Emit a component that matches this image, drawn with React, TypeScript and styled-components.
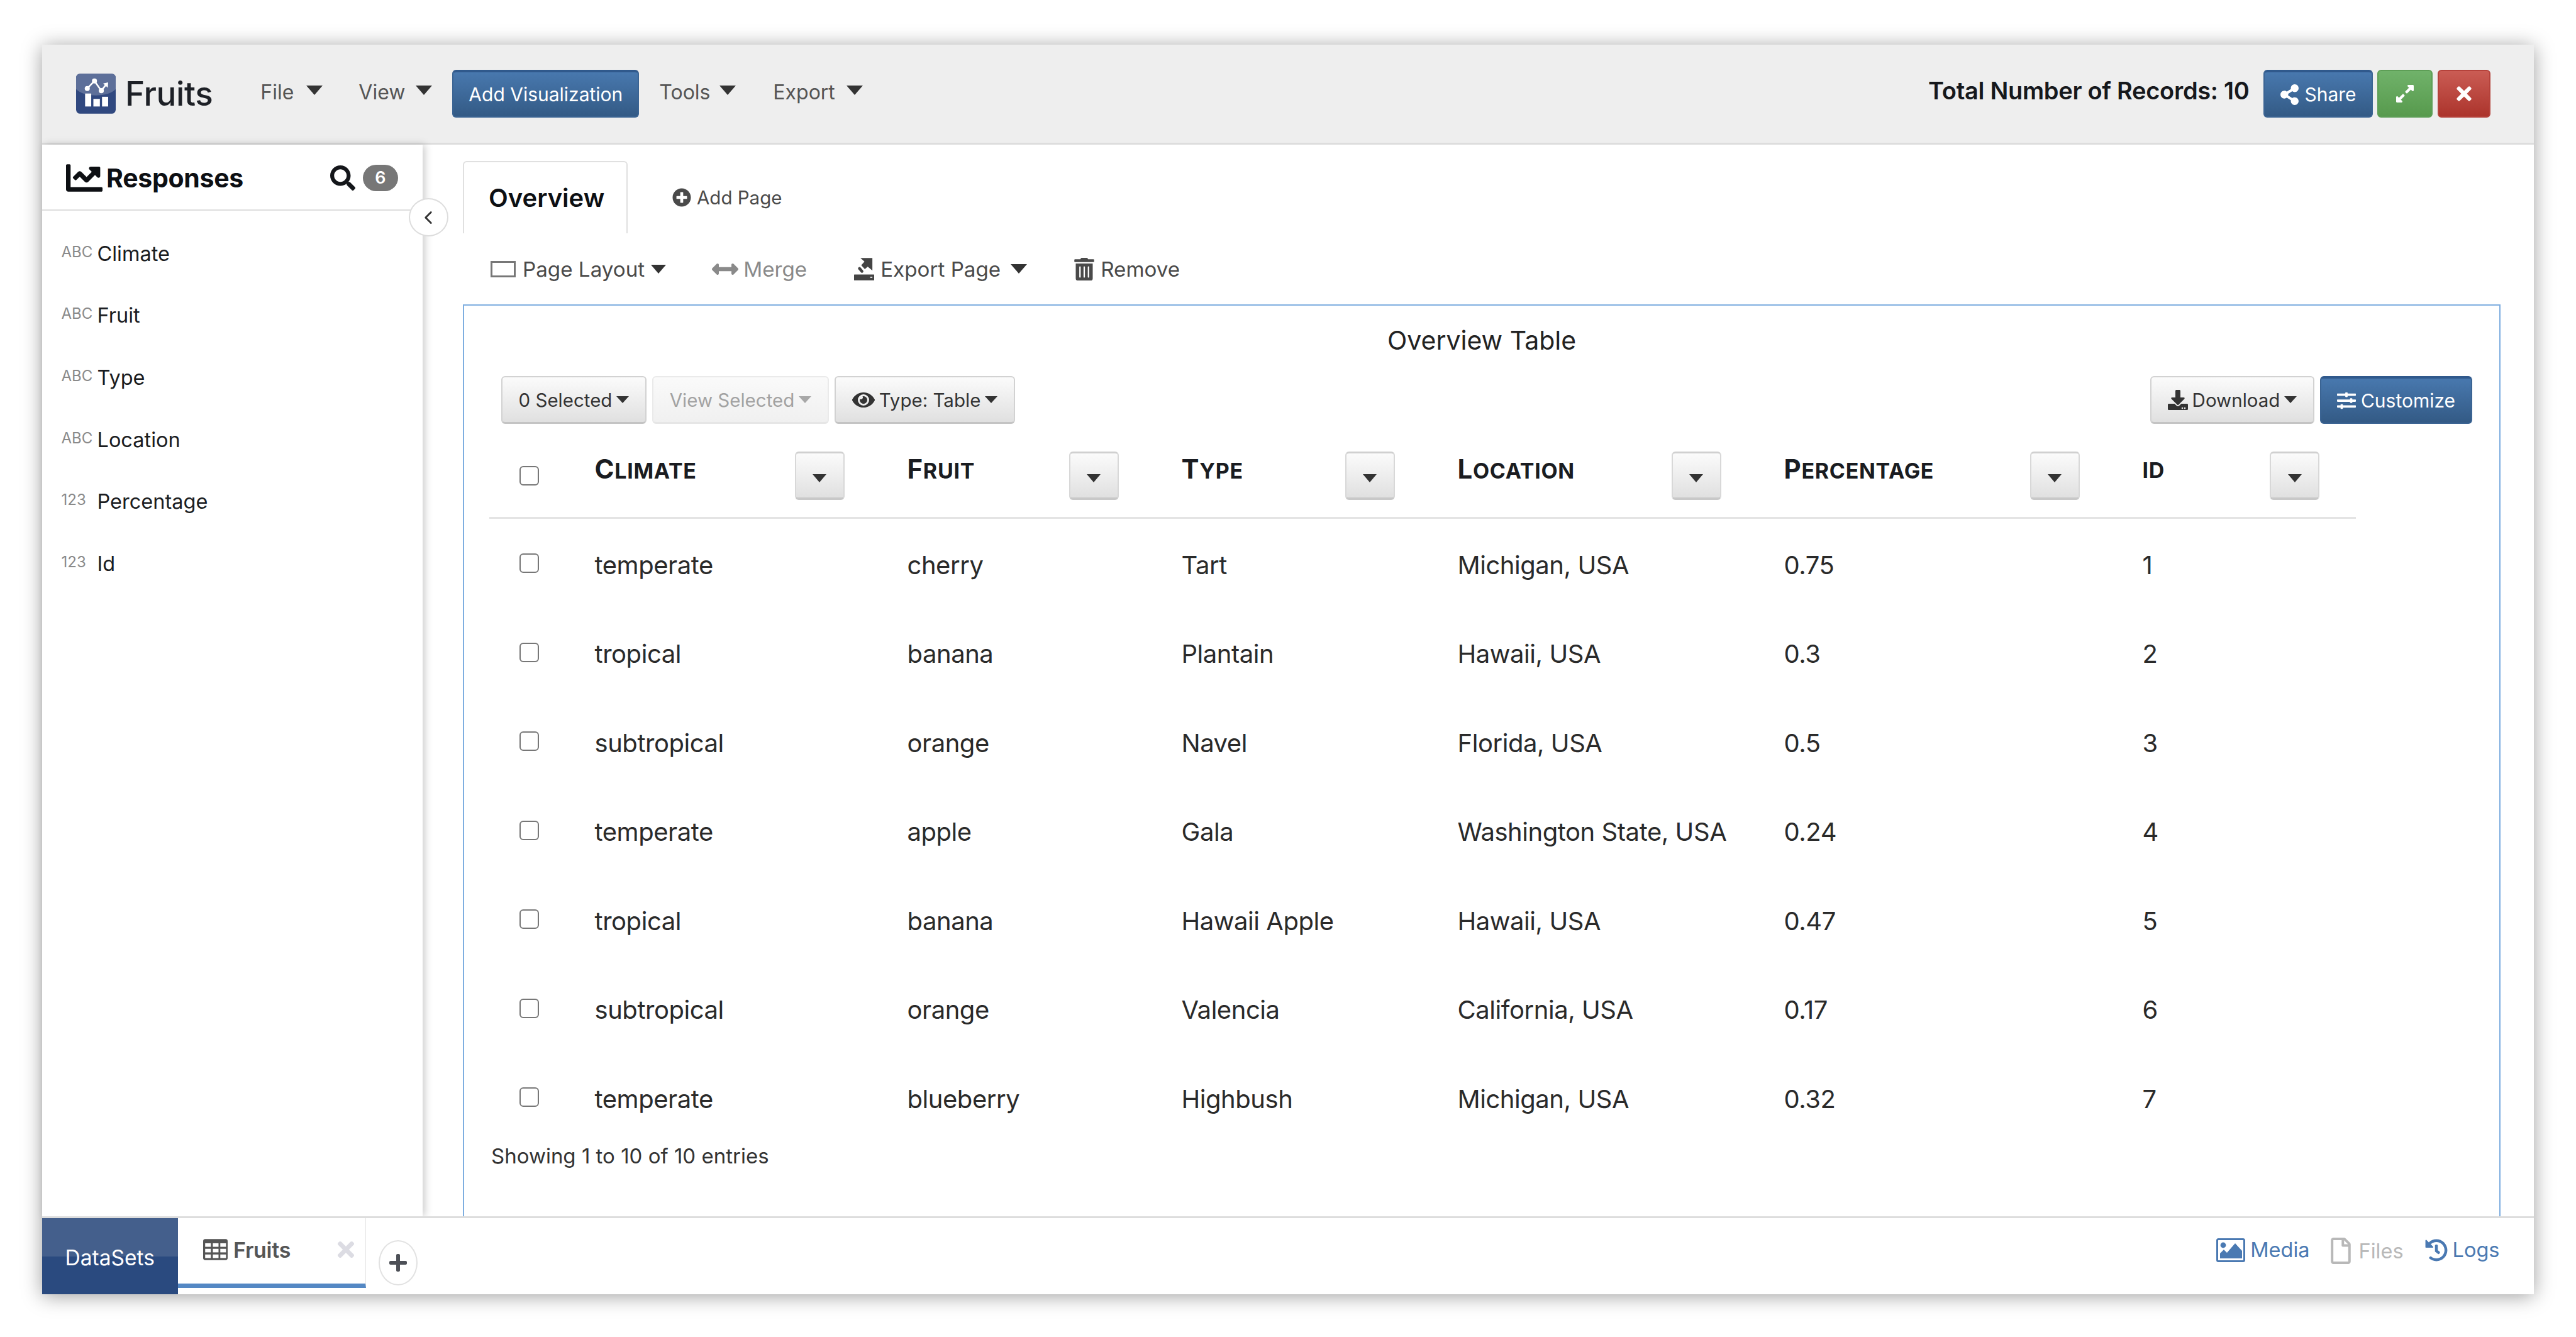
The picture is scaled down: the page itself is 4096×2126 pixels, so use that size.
import React from 'react';
import styled, { createGlobalStyle } from 'styled-components';
import {
  FaChartLine, FaSearch, FaPlusCircle, FaArrowsAltH, FaTrashAlt, FaEye, FaDownload,
  FaSlidersH, FaShareAlt, FaExpandAlt, FaTimes, FaPlus, FaRegFile, FaHistory,
} from 'react-icons/fa';
import { ChevronLeft } from 'lucide-react';

const Global = createGlobalStyle`
  html, body { margin: 0; padding: 0; background: #fff; }
  body { font-family: Inter, "Liberation Sans", sans-serif; color: #222; }
  * { box-sizing: border-box; }
`;

const Page = styled.div`
  width: 4096px;
  height: 2126px;
  padding: 71px 67.5px 68px 66.5px;
  overflow: hidden;
`;
const Frame = styled.div`
  height: 100%;
  display: flex;
  flex-direction: column;
  background: #fff;
  box-shadow: 0 3px 30px rgba(0, 0, 0, 0.38);
`;

/* header */
const Header = styled.header`
  height: 159px;
  flex: none;
  display: flex;
  align-items: center;
  padding: 0 69px 0 54.5px;
  background: #eee;
  border-bottom: 3px solid #ddd;
`;
const Brand = styled.div`
  display: flex;
  align-items: center;
  gap: 15px;
  margin-right: 76px;
`;
const BrandName = styled.span`
  font-size: 53px;
  font-weight: 500;
  color: #1d2026;
  letter-spacing: -0.4px;
`;
const Caret = styled.span<{ $w?: number; $h?: number; $c?: string }>`
  display: inline-block;
  width: 0;
  height: 0;
  flex: none;
  border-left: ${(p) => (p.$w ?? 20) / 2}px solid transparent;
  border-right: ${(p) => (p.$w ?? 20) / 2}px solid transparent;
  border-top: ${(p) => p.$h ?? 12}px solid ${(p) => p.$c ?? '#333'};
`;
const NavCaret = styled(Caret)`
  margin-bottom: 6px;
`;
const NavItem = styled.div<{ $w: number; $after: number }>`
  display: flex;
  align-items: center;
  justify-content: space-between;
  width: ${(p) => p.$w}px;
  margin-right: ${(p) => p.$after}px;
  font-size: 32px;
  color: #555;
  padding-bottom: 6px;
`;
const Btn = styled.button<{ $tone?: string; $h?: number }>`
  display: inline-flex;
  align-items: center;
  justify-content: center;
  height: ${(p) => p.$h ?? 76}px;
  border-radius: 6px;
  font-family: inherit;
  font-size: 30px;
  padding: 0;
  cursor: pointer;
  color: #fff;
  ${(p) =>
    p.$tone === 'green'
      ? 'background: linear-gradient(#70b26a, #579a4d); border: 2px solid #5d9e56;'
      : p.$tone === 'red'
      ? 'background: linear-gradient(#ca5c54, #ac342c); border: 2px solid #b5423b;'
      : 'background: linear-gradient(#4878ae, #335a85); border: 2px solid #3b6493; border-top: 4px solid #30598c;'}
`;
const AddViz = styled(Btn)`
  width: 297px;
  margin-right: 32px;
  font-size: 30px;
`;
const HeaderRight = styled.div`
  margin-left: auto;
  display: flex;
  align-items: center;
`;
const Total = styled.span`
  font-size: 38px;
  font-weight: 600;
  color: #16181c;
  margin-right: 22px;
  padding-bottom: 10px;
  letter-spacing: -0.3px;
`;
const ShareBtn = styled(Btn)`
  width: 174px;
  gap: 7px;
  margin-right: 7px;
`;
const SquareBtn = styled(Btn)<{ $w: number; $after?: number }>`
  width: ${(p) => p.$w}px;
  margin-right: ${(p) => p.$after ?? 0}px;
`;

/* body */
const Body = styled.div`
  flex: 1;
  min-height: 0;
  display: flex;
`;
const Sidebar = styled.aside`
  position: relative;
  width: 605px;
  flex: none;
  background: #fff;
  box-shadow: 4px 0 12px rgba(0, 0, 0, 0.2);
  z-index: 1;
`;
const SideHead = styled.div`
  height: 105px;
  display: flex;
  align-items: center;
  padding: 2px 38.5px 0;
  border-bottom: 2px solid #ddd;
`;
const SideTitle = styled.span`
  font-size: 41px;
  font-weight: 700;
  color: #0d0f13;
  margin-left: 6px;
  letter-spacing: -0.3px;
`;
const SearchWrap = styled.span`
  margin-left: auto;
  margin-right: 12px;
  display: flex;
  color: #14161a;
`;
const Badge = styled.span`
  width: 56px;
  height: 42px;
  border-radius: 21px;
  background: #777;
  color: #fff;
  font-size: 27px;
  font-weight: 600;
  display: flex;
  align-items: center;
  justify-content: center;
`;
const Collapse = styled.button`
  position: absolute;
  top: 85px;
  right: -41px;
  width: 63px;
  height: 61px;
  border-radius: 50%;
  background: #fff;
  border: 2px solid #ddd;
  display: flex;
  align-items: center;
  justify-content: center;
  padding: 0;
  color: #333;
`;
const FieldList = styled.ul`
  list-style: none;
  margin: 0;
  padding: 19px 0 0 31px;
`;
const FieldRow = styled.li`
  height: 98.6px;
  display: flex;
  align-items: center;
`;
const FieldType = styled.span`
  width: 57px;
  font-size: 24px;
  color: #8a8a8a;
  padding-bottom: 6px;
`;
const FieldName = styled.span`
  font-size: 32.5px;
  color: #1a1c21;
`;

/* main */
const Main = styled.main`
  flex: 1;
  min-width: 0;
  display: flex;
  flex-direction: column;
  padding: 26px 52.5px 0 64.5px;
`;
const Tabs = styled.div`
  height: 115px;
  flex: none;
  display: flex;
  align-items: center;
`;
const ActiveTab = styled.div`
  width: 262px;
  height: 115px;
  border: 2px solid #e0e0e0;
  border-bottom: none;
  border-radius: 6px 6px 0 0;
  display: flex;
  align-items: center;
  padding-left: 39px;
  font-size: 40px;
  font-weight: 600;
  color: #0d0f13;
  margin-right: 71px;
`;
const AddPage = styled.div`
  display: flex;
  align-items: center;
  gap: 9px;
  font-size: 29.5px;
  color: #4a4a4a;
`;
const PageTools = styled.div`
  height: 113px;
  flex: none;
  display: flex;
  align-items: center;
  padding-left: 44px;
`;
const PageTool = styled.div<{ $muted?: boolean; $after: number; $gap?: number }>`
  display: flex;
  align-items: center;
  gap: ${(p) => p.$gap ?? 9}px;
  margin-right: ${(p) => p.$after}px;
  font-size: 33.2px;
  color: ${(p) => (p.$muted ? '#8a8a8a' : '#4a4a4a')};
`;
const ToolCaret = styled(Caret)<{ $left: number }>`
  margin-left: ${(p) => p.$left}px;
`;
const Panel = styled.section`
  flex: 1;
  min-height: 0;
  overflow: hidden;
  border: 2px solid #7eaee0;
  border-bottom: none;
  display: flex;
  flex-direction: column;
`;
const PanelTitle = styled.h2`
  margin: 0;
  height: 112px;
  flex: none;
  display: flex;
  align-items: center;
  justify-content: center;
  font-size: 41px;
  font-weight: 400;
  color: #222;
  padding-bottom: 2px;
`;
const TableBar = styled.div`
  flex: none;
  height: 76px;
  display: flex;
  align-items: center;
  gap: 9px;
  padding: 0 43px 0 59px;
`;
const BarSpacer = styled.span`
  flex: 1;
`;
const GreyBtn = styled.button<{ $w: number; $dim?: boolean; $gap?: number }>`
  width: ${(p) => p.$w}px;
  height: 76px;
  display: inline-flex;
  align-items: center;
  justify-content: center;
  gap: ${(p) => p.$gap ?? 7}px;
  padding: 0;
  font-family: inherit;
  font-size: 29.5px;
  border-radius: 6px;
  color: ${(p) => (p.$dim ? '#a2a2a2' : '#333')};
  background: ${(p) => (p.$dim ? 'linear-gradient(#fafafa, #f0f0f0)' : 'linear-gradient(#fbfbfb, #e0e0e0)')};
  border: 2px solid ${(p) => (p.$dim ? '#eaeaea' : '#d2d2d2')};
  border-bottom: 3px solid ${(p) => (p.$dim ? '#e6e6e6' : '#c4c4c4')};
`;
const CustomBtn = styled(Btn)`
  width: 242px;
  gap: 8px;
  font-size: 30px;
`;
const DataTable = styled.div`
  flex: none;
  margin: 17px 0 0 40px;
  width: 2968px;
`;
const Grid = styled.div<{ $h: string; $line?: boolean }>`
  display: grid;
  grid-template-columns: 167.5px 497px 436px 439px 519px 570px 339.5px;
  align-items: center;
  height: ${(p) => p.$h};
  ${(p) => (p.$line ? 'border-bottom: 3px solid #e4e4e4;' : '')}
`;
const CheckCell = styled.div`
  display: flex;
  justify-content: center;
  padding-right: 41px;
`;
const Check = styled.input.attrs({ type: 'checkbox' })`
  appearance: none;
  width: 31px;
  height: 31px;
  margin: 0;
  border: 2.5px solid #777;
  border-radius: 6px;
  background: #fff;
`;
const HeadCell = styled.div<{ $end?: number }>`
  display: flex;
  align-items: center;
  justify-content: space-between;
  padding-right: ${(p) => p.$end ?? 100}px;
`;
const HeadLabel = styled.span<{ $plain?: boolean }>`
  display: inline-block;
  font-size: 34px;
  line-height: 44px;
  font-weight: 700;
  text-transform: uppercase;
  color: #1a1c21;
  margin-bottom: 18px;
  letter-spacing: 0.7px;
  ${(p) => (p.$plain ? '' : '&::first-letter { font-size: 42px; }')}
`;
const SortBtn = styled.button`
  width: 79px;
  height: 77px;
  display: flex;
  align-items: center;
  justify-content: center;
  padding: 8px 0 0;
  border-radius: 6px;
  background: linear-gradient(#fbfbfb, #e0e0e0);
  border: 2px solid #d8d8d8;
  border-top: 3px solid #d0d0d0;
  border-bottom: 4px solid #c8c8c8;
`;
const Cell = styled.div`
  font-size: 40px;
  letter-spacing: -0.45px;
  color: #2a2a2a;
  padding-top: 5px;
`;
const Showing = styled.div`
  flex: none;
  margin: 0 0 0 43px;
  height: 44px;
  line-height: 44px;
  font-size: 33px;
  color: #333;
`;

/* footer */
const Footer = styled.footer`
  height: 124px;
  flex: none;
  display: flex;
  border-top: 3px solid #ddd;
  background: #fff;
  position: relative;
  z-index: 2;
`;
const DataSets = styled.div`
  width: 216.5px;
  flex: none;
  display: flex;
  align-items: center;
  justify-content: center;
  padding-top: 5px;
  font-size: 33.5px;
  color: #fff;
  background: linear-gradient(#445f8c 50%, #2a4a7f 50%);
`;
const SheetTab = styled.div`
  width: 299px;
  flex: none;
  height: 111px;
  display: flex;
  align-items: center;
  padding: 3px 12px 7px 40px;
  border-right: 1px solid #e4e4e4;
  border-bottom: 7px solid #5488c4;
  color: #555;
`;
const SheetName = styled.span`
  font-size: 34px;
  font-weight: 600;
  margin-left: 9px;
  letter-spacing: -0.3px;
`;
const SheetClose = styled.span`
  margin-left: auto;
  display: flex;
  color: #dcdce3;
`;
const AddSheet = styled.button`
  width: 62px;
  height: 72px;
  margin: 35px 0 0 20px;
  border-radius: 50%;
  background: #fff;
  border: 2px solid #e2e2e2;
  display: flex;
  align-items: center;
  justify-content: center;
  padding: 0;
  color: #4d5057;
`;
const FootLinks = styled.div`
  margin-left: auto;
  display: flex;
  align-items: flex-start;
  padding: 31px 54px 0 0;
`;
const FootLink = styled.div<{ $off?: boolean; $after?: number }>`
  display: flex;
  align-items: center;
  gap: 8px;
  font-size: 32.5px;
  color: ${(p) => (p.$off ? '#b8b8b8' : '#4a79b2')};
  margin-right: ${(p) => p.$after ?? 0}px;
`;

const LogoMark = () => (
  <svg width="63" height="64" viewBox="0 0 110 111">
    <rect width="110" height="111" rx="11" fill="#30487f" />
    <path d="M0 43 C20 66 90 66 110 43 V11 A11 11 0 0 0 99 0 H11 A11 11 0 0 0 0 11 Z" fill="#5d6f99" />
    <path d="M31 41 L51 20 L70 47 L86 27" fill="none" stroke="#fff" strokeWidth="4.5" />
    <path d="M75 27 L89 24 L88 39 Z" fill="#fff" />
    <circle cx="31" cy="41" r="7" fill="#fff" />
    <circle cx="51" cy="20" r="7" fill="#fff" />
    <circle cx="70" cy="47" r="7" fill="#fff" />
    <rect x="25" y="55" width="17" height="36" fill="#fff" />
    <rect x="48" y="70" width="18" height="21" fill="#fff" />
    <rect x="72" y="64" width="17" height="27" fill="#fff" />
  </svg>
);

const LayoutIcon = () => (
  <svg width="40" height="26" viewBox="0 0 40 26">
    <rect x="1.5" y="1.5" width="37" height="23" fill="none" stroke="#777" strokeWidth="3" />
  </svg>
);

const ExportIcon = () => (
  <svg width="32" height="36" viewBox="30 33 56 62" fill="#444">
    <path d="M47.7 33 H81 V68 L68 57 L60 64 L50 53 L59 43 Z" />
    <path d="M45 62 L52 70" stroke="#444" strokeWidth="8" strokeLinecap="round" />
    <rect x="30" y="79" width="56" height="16" rx="1" />
    <rect x="75" y="85" width="6" height="3" fill="#fff" />
  </svg>
);

const GridIcon = () => (
  <svg width="39" height="34" viewBox="0 0 69 59">
    <rect width="69" height="59" rx="6" fill="#555" />
    {[11.7, 27.3, 43.3].map((y) =>
      [5.7, 27.3, 48.3].map((x) => <rect key={`${x}-${y}`} x={x} y={y} width="16" height="10" fill="#fff" />)
    )}
  </svg>
);

const ImageIcon = () => (
  <svg width="46" height="38" viewBox="0 0 46 38">
    <rect x="1.5" y="1.5" width="43" height="35" rx="2" fill="#fff" stroke="#4a79b2" strokeWidth="3" />
    <circle cx="11" cy="11" r="4.4" fill="#4a79b2" />
    <path d="M6 32 V24 L12 18 L17 23 L30 8 L41 20 V32 Z" fill="#4a79b2" />
  </svg>
);

const fields = [
  ['ABC', 'Climate'],
  ['ABC', 'Fruit'],
  ['ABC', 'Type'],
  ['ABC', 'Location'],
  ['123', 'Percentage'],
  ['123', 'Id'],
];
const columns = ['Climate', 'Fruit', 'Type', 'Location', 'Percentage', 'ID'];
const rows = [
  ['temperate', 'cherry', 'Tart', 'Michigan, USA', '0.75', '1'],
  ['tropical', 'banana', 'Plantain', 'Hawaii, USA', '0.3', '2'],
  ['subtropical', 'orange', 'Navel', 'Florida, USA', '0.5', '3'],
  ['temperate', 'apple', 'Gala', 'Washington State, USA', '0.24', '4'],
  ['tropical', 'banana', 'Hawaii Apple', 'Hawaii, USA', '0.47', '5'],
  ['subtropical', 'orange', 'Valencia', 'California, USA', '0.17', '6'],
  ['temperate', 'blueberry', 'Highbush', 'Michigan, USA', '0.32', '7'],
];

export default function App() {
  return (
    <Page>
      <Global />
      <Frame>
        <Header>
          <Brand>
            <LogoMark />
            <BrandName>Fruits</BrandName>
          </Brand>
          <NavItem $w={99} $after={57}>File <NavCaret $w={26} $h={15} /></NavItem>
          <NavItem $w={117} $after={32}>View <NavCaret $w={26} $h={15} /></NavItem>
          <AddViz>Add Visualization</AddViz>
          <NavItem $w={122} $after={59}>Tools <NavCaret $w={26} $h={15} /></NavItem>
          <NavItem $w={143} $after={0}>Export <NavCaret $w={26} $h={15} /></NavItem>
          <HeaderRight>
            <Total>Total Number of Records: 10</Total>
            <ShareBtn><FaShareAlt size={33} /> Share</ShareBtn>
            <SquareBtn $tone="green" $w={88} $after={8}><FaExpandAlt size={32} /></SquareBtn>
            <SquareBtn $tone="red" $w={84}><FaTimes size={34} /></SquareBtn>
          </HeaderRight>
        </Header>
        <Body>
          <Sidebar>
            <SideHead>
              <FaChartLine size={58} color="#0d0f13" />
              <SideTitle>Responses</SideTitle>
              <SearchWrap><FaSearch size={40} /></SearchWrap>
              <Badge>6</Badge>
            </SideHead>
            <Collapse><ChevronLeft size={34} strokeWidth={2} /></Collapse>
            <FieldList>
              {fields.map(([t, n]) => (
                <FieldRow key={n}>
                  <FieldType>{t}</FieldType>
                  <FieldName>{n}</FieldName>
                </FieldRow>
              ))}
            </FieldList>
          </Sidebar>
          <Main>
            <Tabs>
              <ActiveTab>Overview</ActiveTab>
              <AddPage><FaPlusCircle size={30} />Add Page</AddPage>
            </Tabs>
            <PageTools>
              <PageTool $after={73} $gap={11}>
                <LayoutIcon /><span>Page Layout</span><ToolCaret $left={-1} $w={24} $h={14} />
              </PageTool>
              <PageTool $muted $after={75} $gap={8}>
                <FaArrowsAltH size={42} /><span>Merge</span>
              </PageTool>
              <PageTool $after={73} $gap={10}>
                <ExportIcon /><span>Export Page</span><ToolCaret $left={6} $w={26} $h={15} />
              </PageTool>
              <PageTool $after={0} $gap={8}>
                <FaTrashAlt size={36} /><span>Remove</span>
              </PageTool>
            </PageTools>
            <Panel>
              <PanelTitle>Overview Table</PanelTitle>
              <TableBar>
                <GreyBtn $w={231}>0 Selected <Caret $w={20} $h={11} /></GreyBtn>
                <GreyBtn $w={281} $dim>View Selected <Caret $w={20} $h={11} $c="#a8a8a8" /></GreyBtn>
                <GreyBtn $w={287}><FaEye size={36} /> Type: Table <Caret $w={20} $h={11} /></GreyBtn>
                <BarSpacer />
                <GreyBtn $w={261}><FaDownload size={32} /> Download <Caret $w={20} $h={11} /></GreyBtn>
                <CustomBtn><FaSlidersH size={30} /> Customize</CustomBtn>
              </TableBar>
              <DataTable>
                <Grid $h="134px" $line>
                  <CheckCell><Check /></CheckCell>
                  {columns.map((c, i) => (
                    <HeadCell key={c} $end={i === 5 ? 58 : 100}>
                      <HeadLabel $plain={c === 'ID'}>{c}</HeadLabel>
                      <SortBtn><Caret $w={22} $h={13} /></SortBtn>
                    </HeadCell>
                  ))}
                </Grid>
                {rows.map((r, ri) => (
                  <Grid $h="141.5px" key={ri}>
                    <CheckCell><Check /></CheckCell>
                    {r.map((v, ci) => <Cell key={ci}>{v}</Cell>)}
                  </Grid>
                ))}
              </DataTable>
              <Showing>Showing 1 to 10 of 10 entries</Showing>
            </Panel>
          </Main>
        </Body>
        <Footer>
          <DataSets>DataSets</DataSets>
          <SheetTab>
            <GridIcon />
            <SheetName>Fruits</SheetName>
            <SheetClose><FaTimes size={38} /></SheetClose>
          </SheetTab>
          <AddSheet><FaPlus size={32} /></AddSheet>
          <FootLinks>
            <FootLink $after={28}><ImageIcon />Media</FootLink>
            <FootLink $off $after={34}><FaRegFile size={42} />Files</FootLink>
            <FootLink><FaHistory size={36} />Logs</FootLink>
          </FootLinks>
        </Footer>
      </Frame>
    </Page>
  );
}
